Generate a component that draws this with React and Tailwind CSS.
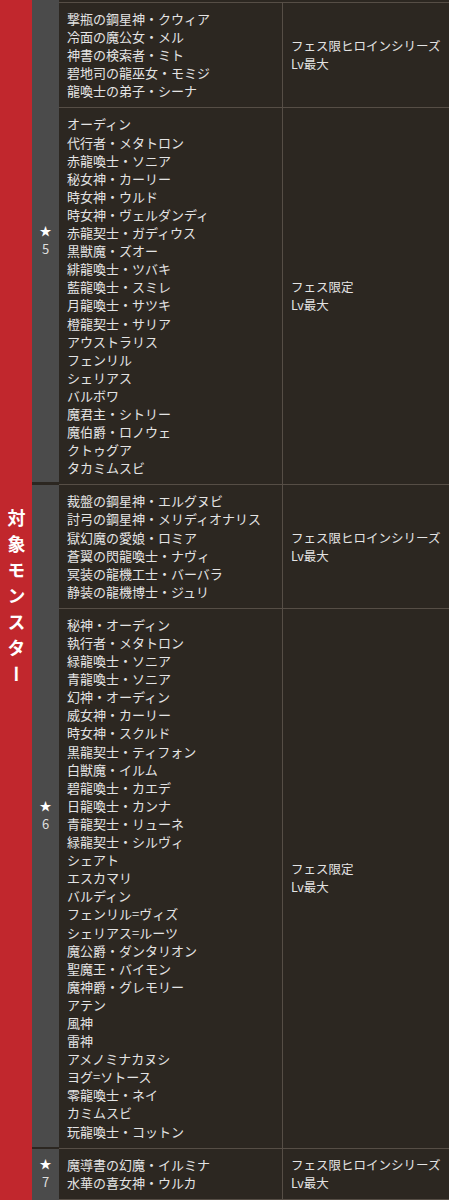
import React from 'react';

const rows = [
  {
    names: ['撃瓶の鋼星神・クウィア', '冷面の魔公女・メル', '神書の検索者・ミト', '碧地司の龍巫女・モミジ', '龍喚士の弟子・シーナ'],
    cond: ['フェス限ヒロインシリーズ', 'Lv最大'],
  },
  {
    names: [
      'オーディン', '代行者・メタトロン', '赤龍喚士・ソニア', '秘女神・カーリー', '時女神・ウルド',
      '時女神・ヴェルダンディ', '赤龍契士・ガディウス', '黒獣魔・ズオー', '緋龍喚士・ツバキ', '藍龍喚士・スミレ',
      '月龍喚士・サツキ', '橙龍契士・サリア', 'アウストラリス', 'フェンリル', 'シェリアス',
      'バルボワ', '魔君主・シトリー', '魔伯爵・ロノウェ', 'クトゥグア', 'タカミムスビ',
    ],
    cond: ['フェス限定', 'Lv最大'],
  },
  {
    names: ['裁盤の鋼星神・エルグヌビ', '討弓の鋼星神・メリディオナリス', '獄幻魔の愛娘・ロミア', '蒼翼の閃龍喚士・ナヴィ', '冥装の龍機工士・バーバラ', '静装の龍機博士・ジュリ'],
    cond: ['フェス限ヒロインシリーズ', 'Lv最大'],
  },
  {
    names: [
      '秘神・オーディン', '執行者・メタトロン', '緑龍喚士・ソニア', '青龍喚士・ソニア', '幻神・オーディン',
      '威女神・カーリー', '時女神・スクルド', '黒龍契士・ティフォン', '白獣魔・イルム', '碧龍喚士・カエデ',
      '日龍喚士・カンナ', '青龍契士・リューネ', '緑龍契士・シルヴィ', 'シェアト', 'エスカマリ',
      'バルディン', 'フェンリル=ヴィズ', 'シェリアス=ルーツ', '魔公爵・ダンタリオン', '聖魔王・バイモン',
      '魔神爵・グレモリー', 'アテン', '風神', '雷神', 'アメノミナカヌシ',
      'ヨグ=ソトース', '零龍喚士・ネイ', 'カミムスビ', '玩龍喚士・コットン',
    ],
    cond: ['フェス限定', 'Lv最大'],
  },
  {
    names: ['魔導書の幻魔・イルミナ', '水華の喜女神・ウルカ'],
    cond: ['フェス限ヒロインシリーズ', 'Lv最大'],
  },
];

const rowStart = ['row-start-1', 'row-start-2', 'row-start-3', 'row-start-4', 'row-start-5'];

const Star = ({ n, className }) => (
  <div className={`col-start-2 flex flex-col items-center justify-center bg-[#4b4b4b] ${className}`}>
    <span className="text-[12px] leading-[16px] text-white">★</span>
    <span className="text-[13px] leading-[20px] text-[#dedede]">{n}</span>
  </div>
);

export default function App() {
  return (
    <div
      className="min-h-[1200px] w-[449px] bg-[#2c2721] text-[13px] text-[#e4e4e4]"
      style={{ fontFamily: '"Noto Sans CJK JP", "Noto Sans", sans-serif' }}
    >
      <div className="grid grid-cols-[32px_27px_223px_1fr] grid-rows-[repeat(5,auto)]">
        <div className="col-start-1 row-start-1 row-span-5 flex items-center justify-center bg-[#c1272d]">
          <span className="text-[18px] font-bold tracking-[8px] text-white [writing-mode:vertical-rl]">
            対象モンスター
          </span>
        </div>

        <Star n="5" className="row-start-1 row-span-2 border-b-[3px] border-[#2c2721]" />
        <Star n="6" className="row-start-3 row-span-2 border-b-[2px] border-[#2c2721]" />
        <Star n="7" className="row-start-5" />

        {rows.map((r, i) => (
          <React.Fragment key={i}>
            <div
              className={`col-start-3 ${rowStart[i]} border-b border-[#564e46] pl-2 pt-[7px] pb-[7px] leading-[18.1px] ${
                i === 0 ? 'mt-[2px] border-t' : ''
              }`}
            >
              {r.names.map((n) => (
                <div key={n} className="whitespace-nowrap">{n}</div>
              ))}
            </div>
            <div
              className={`col-start-4 ${rowStart[i]} flex flex-col justify-center border-b border-l border-[#564e46] pl-2 text-[12.5px] leading-[18px] ${
                i === 0 ? 'mt-[2px] border-t' : ''
              }`}
            >
              {r.cond.map((c) => (
                <div key={c}>{c}</div>
              ))}
            </div>
          </React.Fragment>
        ))}
      </div>
    </div>
  );
}
